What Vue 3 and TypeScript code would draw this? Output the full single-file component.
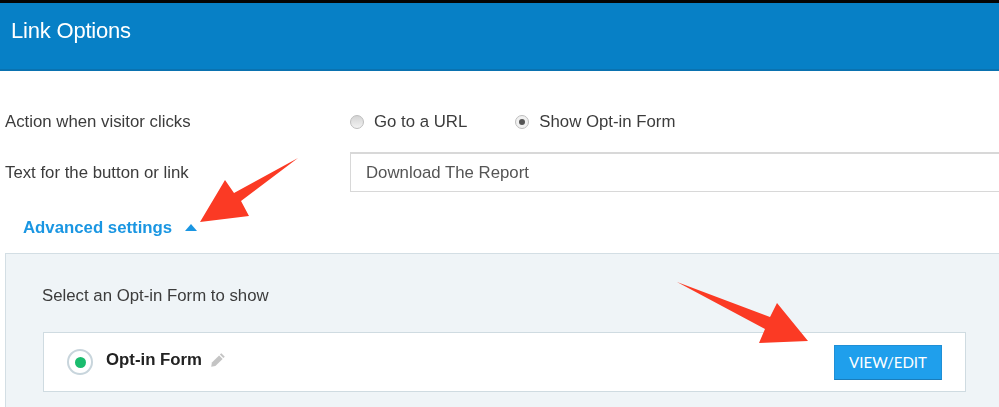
<template>
  <div class="page">
    <header class="header">
      <h1 class="title">Link Options</h1>
    </header>

    <div class="form">
      <div class="row radio-row">
        <span class="label">Action when visitor clicks</span>
        <div class="radios">
          <label class="radio-item">
            <span class="radio"></span>
            Go to a URL
          </label>
          <label class="radio-item">
            <span class="radio checked"></span>
            Show Opt-in Form
          </label>
        </div>
      </div>
      <div class="row input-row">
        <span class="label">Text for the button or link</span>
        <div class="text-input">{{ buttonText }}</div>
      </div>
      <a class="advanced">
        Advanced settings
        <span class="caret"></span>
      </a>
    </div>

    <section class="panel">
      <p class="panel-title">Select an Opt-in Form to show</p>
      <div class="card">
        <span class="status"><span class="status-dot"></span></span>
        <span class="card-name">Opt-in Form</span>
        <svg class="pencil" viewBox="0 0 16 16" width="16" height="16">
          <path d="M11.3 1.2 14.8 4.7 13.4 6.1 9.9 2.6Z" fill="#c4c4c4" />
          <path d="M9.1 3.4 12.6 6.9 5.4 14.1 1.2 14.8 1.9 10.6Z" fill="#c4c4c4" />
        </svg>
        <button class="view-btn">VIEW/EDIT</button>
      </div>
    </section>

    <svg class="arrows" viewBox="0 0 999 407" width="999" height="407">
      <polygon fill="#fb3a24" points="200,222 225,180 234,193 298,158 241,201 249,216" />
      <polygon fill="#fb3a24" points="677,282 770,317 777,303 808,341 759,343 765,329" />
    </svg>
  </div>
</template>

<script setup lang="ts">
import { ref } from 'vue';

const buttonText = ref<string>('Download The Report');
</script>

<style>
html,
body {
  margin: 0;
  background: #fff;
  overflow: hidden;
}
</style>

<style scoped>
.page {
  position: relative;
  width: 999px;
  height: 407px;
  overflow: hidden;
  border-top: 3px solid #050505;
  box-sizing: border-box;
  font-family: "Liberation Sans", Arial, sans-serif;
  color: #3c3c3c;
  font-size: 16.8px;
  filter: blur(0.35px);
}

.header {
  height: 68px;
  box-sizing: border-box;
  padding: 16px 11px 0;
  background: #0780c6;
  border-bottom: 2px solid #0a72b0;
}

.title {
  margin: 0;
  font-size: 22px;
  line-height: 24px;
  font-weight: 400;
  letter-spacing: -0.2px;
  color: #fff;
}

.form {
  padding: 39px 0 0 5px;
}

.row {
  display: flex;
  align-items: center;
}

.radio-row {
  height: 24px;
}

.input-row {
  height: 40px;
  margin-top: 18px;
}

.label {
  width: 345px;
  flex-shrink: 0;
}

.input-row .label {
  margin-top: 2px;
}

.radios {
  display: flex;
  gap: 48px;
}

.radio-item {
  display: flex;
  align-items: center;
  gap: 10px;
}

.radio {
  width: 14px;
  height: 14px;
  box-sizing: border-box;
  border: 1px solid #bdbdbd;
  border-radius: 50%;
  background: linear-gradient(#d4d4d4, #f2f2f2);
  display: flex;
  align-items: center;
  justify-content: center;
}

.radio.checked {
  background: #f1f1f1;
}

.radio.checked::after {
  content: "";
  width: 6px;
  height: 6px;
  border-radius: 50%;
  background: #555;
}

.text-input {
  flex: 1;
  height: 40px;
  box-sizing: border-box;
  margin-right: -10px;
  padding: 0 15px;
  border: 1px solid #d8d8d8;
  border-top-width: 2px;
  line-height: 37px;
  color: #555;
}

.advanced {
  display: flex;
  align-items: center;
  gap: 13px;
  height: 24px;
  margin: 24px 0 0 18px;
  font-weight: 700;
  color: #1a96e2;
}

.caret {
  width: 0;
  height: 0;
  margin-top: -1px;
  border-left: 6.5px solid transparent;
  border-right: 6.5px solid transparent;
  border-bottom: 7px solid #1a96e2;
}

.panel {
  margin: 13px -10px 0 5px;
  height: 170px;
  box-sizing: border-box;
  padding: 32px 43px 0 36px;
  background: #eff4f7;
  border: 1px solid #d3dee4;
}

.panel-title {
  margin: 0;
  line-height: 20px;
  color: #3c3c3c;
}

.card {
  display: flex;
  align-items: center;
  width: 923px;
  height: 60px;
  box-sizing: border-box;
  margin: 26px 0 0 1px;
  padding: 0 23px;
  background: #fff;
  border: 1px solid #cfdbe1;
}

.status {
  width: 26px;
  height: 26px;
  box-sizing: border-box;
  border: 2px solid #c8d5dc;
  border-radius: 50%;
  display: flex;
  align-items: center;
  justify-content: center;
  flex-shrink: 0;
}

.status-dot {
  width: 11px;
  height: 11px;
  border-radius: 50%;
  background: #1bbc6e;
}

.card-name {
  margin-left: 13px;
  margin-top: -5px;
  font-weight: 700;
  color: #222;
}

.pencil {
  margin-left: 8px;
  margin-top: -4px;
}

.view-btn {
  margin-left: auto;
  width: 108px;
  height: 35px;
  padding: 0;
  border: 1px solid #1f8fd6;
  border-bottom-color: #1a7dbc;
  border-radius: 0;
  background: #1f9fec;
  color: #fff;
  font-family: Lato, sans-serif;
  font-size: 15px;
}

.arrows {
  position: absolute;
  top: -3px;
  left: 0;
  pointer-events: none;
}
</style>
